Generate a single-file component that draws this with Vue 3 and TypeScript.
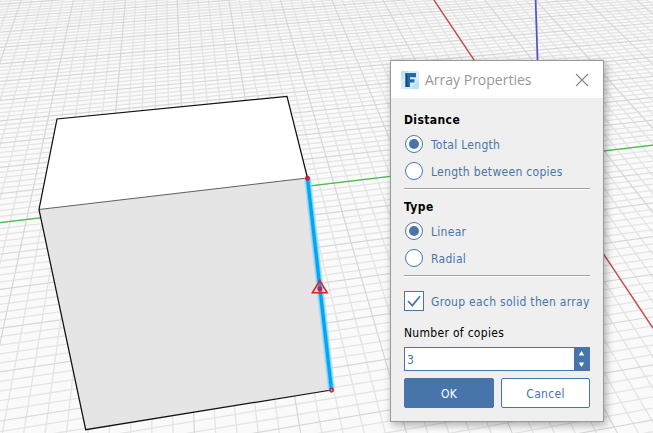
<script setup lang="ts">
import { ref } from 'vue'

interface Segment {
  x1: number
  y1: number
  x2: number
  y2: number
  major: boolean
}

const distance = ref('total')
const arrayType = ref('linear')
const grouped = ref(true)
const copies = ref('3')

const distanceOptions = [
  { value: 'total', label: 'Total Length' },
  { value: 'between', label: 'Length between copies' },
]
const typeOptions = [
  { value: 'linear', label: 'Linear' },
  { value: 'radial', label: 'Radial' },
]

// Perspective ground plane: each family of lines meets at its own vanishing point.
const gridLines: Segment[] = []

for (let n = -65; n <= 35; n++) {
  const t = (n / 5) * 0.001555
  const x0 = (434 + t * 33200) / (1 + t)
  const at = (y: number) => 161 + ((x0 - 161) * (y + 410)) / 410
  gridLines.push({ x1: at(-5), y1: -5, x2: at(440), y2: 440, major: n % 5 === 0 })
}
for (let n = -42; n <= 62; n++) {
  const y0 = 1 / (0.001576 + (n / 5) * 0.0000751) - 412
  const at = (x: number) => y0 + ((-352 - y0) * x) / 4842
  gridLines.push({ x1: -5, y1: at(-5), x2: 660, y2: at(660), major: n % 5 === 0 })
}
gridLines.sort((a, b) => Number(a.major) - Number(b.major))

function step(delta: number) {
  copies.value = String(Math.max(1, Number(copies.value) + delta))
}
</script>

<template>
  <main class="viewport">
    <svg class="scene" width="653" height="433" viewBox="0 0 653 433">
      <line
        v-for="(l, i) in gridLines"
        :key="i"
        :class="l.major ? 'major' : 'minor'"
        :x1="l.x1"
        :y1="l.y1"
        :x2="l.x2"
        :y2="l.y2"
      />
      <line class="axis-x" x1="434" y1="0" x2="653" y2="328" />
      <line class="axis-y" x1="0" y1="222.7" x2="653" y2="145.2" />
      <line class="axis-z" x1="535.6" y1="0" x2="537.6" y2="62" />
      <polygon class="top-face" points="57,119 287,96.3 307.5,178 39,209.5" />
      <polygon class="front-face" points="39,209.5 307.5,178 331.5,390 85.7,429.7" />
      <path class="crease" d="M39 209.5L307.5 178" />
      <path class="edge" d="M307.5 178L287 96.3L57 119L39 209.5L85.7 429.7L331.5 390" />
      <path class="glow outer" d="M307.5 178L331.5 390" />
      <path class="glow inner" d="M307.5 178L331.5 390" />
      <path class="selected" d="M307.5 178L331.5 390" />
      <circle class="handle" cx="307.5" cy="178.3" r="1.7" />
      <circle class="handle open" cx="331.5" cy="390.3" r="1.7" />
      <path class="warning" d="M319.8 280.6L327.2 292.8H312.4Z" />
      <circle class="handle mid" cx="319.8" cy="288.7" r="1.7" />
    </svg>

    <section class="dialog">
      <header class="titlebar">
        <svg class="logo" width="18" height="18" viewBox="0 0 18 18">
          <rect width="18" height="18" fill="#d3eefa" />
          <path d="M0 0H7L0 10ZM18 18H9L18 8Z" fill="#bce3f5" />
          <path d="M4.5 2H15V6.2H9V8.2H13.5V11.5H9V16H4.5Z" fill="#2469ad" />
          <path d="M4.5 2L6.5 4V14L8.5 16H4.5Z" fill="#1a4a83" />
        </svg>
        <span class="title">Array Properties</span>
        <svg class="close" width="14" height="14" viewBox="0 0 14 14">
          <path d="M1 1L13 13M13 1L1 13" />
        </svg>
      </header>
      <div class="body">
        <div class="group">
          <h2>Distance</h2>
          <label v-for="o in distanceOptions" :key="o.value" class="option" @click="distance = o.value">
            <span class="radio"><i v-if="distance === o.value"></i></span>
            <span class="option-label">{{ o.label }}</span>
          </label>
        </div>
        <div class="group second">
          <h2>Type</h2>
          <label v-for="o in typeOptions" :key="o.value" class="option" @click="arrayType = o.value">
            <span class="radio"><i v-if="arrayType === o.value"></i></span>
            <span class="option-label">{{ o.label }}</span>
          </label>
        </div>
        <label class="check-row" @click="grouped = !grouped">
          <span class="checkbox">
            <svg v-if="grouped" width="18" height="18" viewBox="0 0 18 18">
              <path d="M3 9L7.3 13.6L15 4.3" />
            </svg>
          </span>
          <span class="check-label">Group each solid then array</span>
        </label>
        <div class="field-label">Number of copies</div>
        <div class="spinner">
          <span class="value">{{ copies }}</span>
          <span class="arrows">
            <svg width="7" height="5" viewBox="0 0 7 5" @click="step(1)"><path d="M3.5 0L6.3 4.6H.7Z" /></svg>
            <svg width="7" height="5" viewBox="0 0 7 5" @click="step(-1)"><path d="M3.5 5L6.3 .4H.7Z" /></svg>
          </span>
        </div>
        <div class="actions">
          <button class="primary" type="button">OK</button>
          <button type="button">Cancel</button>
        </div>
      </div>
    </section>
  </main>
</template>

<style>
body {
  overflow: hidden;
}
</style>

<style scoped>
.viewport {
  position: relative;
  width: 653px;
  height: 433px;
  overflow: hidden;
  background: #fafafa;
}
.scene {
  display: block;
}
.minor {
  stroke: #e4e4e4;
  stroke-width: 1.3;
}
.major {
  stroke: #d7d7d7;
  stroke-width: 1.2;
}
.axis-x {
  stroke: #c45050;
  stroke-width: 1.4;
}
.axis-y {
  stroke: #46bd46;
  stroke-width: 1.2;
}
.axis-z {
  stroke: #5050c0;
  stroke-width: 1.7;
}
.top-face {
  fill: #fff;
}
.front-face {
  fill: #e5e5e5;
}
.crease,
.edge,
.glow,
.selected {
  fill: none;
}
.crease {
  stroke: #606060;
  stroke-width: 1;
}
.edge {
  stroke: #111;
  stroke-width: 1.25;
}
.glow.outer {
  stroke: #8fd8fb;
  stroke-opacity: 0.55;
  stroke-width: 7.5;
}
.glow.inner {
  stroke: #5cc8fa;
  stroke-opacity: 0.7;
  stroke-width: 5.2;
}
.selected {
  stroke: #00a6f4;
  stroke-width: 3.2;
}
.handle {
  fill: #7b4a5c;
  stroke: #e8101c;
  stroke-width: 1.5;
}
.open {
  fill: #7fc4e8;
}
.mid {
  fill: #4a5a90;
}
.warning {
  fill: none;
  stroke: #ea1c24;
  stroke-width: 1.6;
}
.dialog {
  position: absolute;
  left: 390px;
  top: 60px;
  box-sizing: border-box;
  width: 214px;
  height: 362px;
  border: 1px solid #999;
  background: #efefef;
  box-shadow: 2px 3px 8px rgba(0, 0, 0, 0.32);
  color: #000;
  font-family: 'DejaVu Sans Condensed', 'DejaVu Sans', sans-serif;
  font-stretch: condensed;
  font-size: 12px;
  letter-spacing: 0.3px;
  line-height: 16px;
}
.titlebar {
  display: flex;
  align-items: center;
  box-sizing: border-box;
  height: 37px;
  padding: 0 14px 0 10px;
  background: #fff;
}
.title {
  flex: 1;
  margin-left: 6px;
  color: #999;
  font-family: 'Open Sans', sans-serif;
  font-stretch: normal;
  font-size: 14px;
  letter-spacing: 0;
  line-height: 20px;
  white-space: nowrap;
}
.close path {
  fill: none;
  stroke: #858585;
  stroke-width: 1.1;
}
.body {
  padding: 14px 13px 0;
}
.group {
  box-sizing: border-box;
  height: 77px;
  border-bottom: 1px solid #a0a0a0;
  box-shadow: 0 1px #fff;
}
.second {
  height: 87px;
  padding-top: 10px;
}
h2 {
  margin: 0 0 3px;
  font-size: 12px;
  letter-spacing: 0.4px;
  line-height: 16px;
  font-weight: 700;
}
.option {
  display: flex;
  align-items: center;
  gap: 8px;
  height: 27px;
  padding-left: 1px;
  color: #4775ab;
  white-space: nowrap;
}
h2 + .option {
  height: 25px;
  margin-bottom: 1px;
}
.option-label,
.check-label {
  padding-top: 2px;
}
.radio {
  display: grid;
  place-items: center;
  box-sizing: border-box;
  width: 18px;
  height: 18px;
  border: 1px solid #4775ab;
  border-radius: 50%;
  background: #fff;
}
.radio i {
  width: 10px;
  height: 10px;
  border-radius: 50%;
  background: #4775ab;
}
.check-row {
  display: flex;
  align-items: center;
  gap: 7px;
  margin-top: 15px;
  color: #4775ab;
  white-space: nowrap;
}
.checkbox {
  box-sizing: border-box;
  width: 20px;
  height: 20px;
  border: 1px solid #4775ab;
  background: #fff;
}
.checkbox svg {
  display: block;
}
.checkbox path {
  fill: none;
  stroke: #4775ab;
  stroke-width: 1.8;
}
.field-label {
  margin-top: 14px;
}
.spinner {
  display: flex;
  box-sizing: border-box;
  height: 24px;
  margin-top: 6px;
  border: 1px solid #4775ab;
  background: #fff;
}
.value {
  flex: 1;
  padding-left: 2px;
  color: #4775ab;
  line-height: 24px;
}
.arrows {
  display: flex;
  flex-direction: column;
  align-items: center;
  justify-content: space-between;
  box-sizing: border-box;
  width: 15px;
  padding: 3px 0;
  background: #4775ab;
}
.arrows path {
  fill: #fff;
}
.actions {
  display: grid;
  grid-template-columns: 90px 89px;
  gap: 7px;
  margin-top: 7px;
}
button {
  box-sizing: border-box;
  height: 30px;
  padding: 1px 0 0;
  border: 1px solid #4775ab;
  border-radius: 2px;
  background: #fff;
  color: #4775ab;
  font: inherit;
  letter-spacing: 0.3px;
}
.primary {
  background: #4775ab;
  color: #fff;
}
</style>
